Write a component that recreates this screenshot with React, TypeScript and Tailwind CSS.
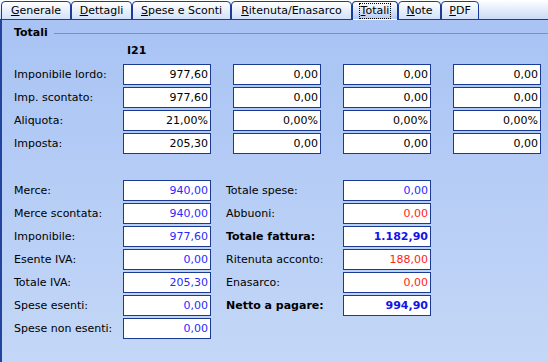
import React from 'react';

const tabs: { label: string; w: string }[] = [
    { label: 'Generale', w: 'w-[70px]' },
    { label: 'Dettagli', w: 'w-[61px]' },
    { label: 'Spese e Sconti', w: 'w-[99px]' },
    { label: 'Ritenuta/Enasarco', w: 'w-[121px]' },
    { label: 'Totali', w: 'w-[46px]' },
    { label: 'Note', w: 'w-[43px]' },
    { label: 'PDF', w: 'w-[38px]' },
];

const Tab: React.FC<{ label: string; w: string; active?: boolean }> = ({ label, w, active }) => (
    <div
        className={`relative -mb-px flex h-[19px] ${w} items-center justify-center rounded-t-[4px] border border-[#1b3c98] bg-gradient-to-b from-white ${active ? 'border-b-transparent to-[#b4cbf4]' : 'to-[#d3e1f8]'}`}
    >
        <span className={`px-[1px] leading-[14px] ${active ? 'outline outline-1 outline-dotted outline-black' : ''}`}>
            <span className="underline underline-offset-1">{label[0]}</span>
            {label.slice(1)}
        </span>
    </div>
);

const Box: React.FC<{ value: string; color?: string; bold?: boolean }> = ({ value, color = 'text-black', bold }) => (
    <div
        className={`flex h-[21px] w-[88px] items-center justify-end border border-[#1a3a94] bg-white pr-[2px] ${color} ${bold ? 'font-bold' : ''}`}
    >
        {value}
    </div>
);

const topRows = [
    { label: 'Imponibile lordo:', values: ['977,60', '0,00', '0,00', '0,00'] },
    { label: 'Imp. scontato:', values: ['977,60', '0,00', '0,00', '0,00'] },
    { label: 'Aliquota:', values: ['21,00%', '0,00%', '0,00%', '0,00%'] },
    { label: 'Imposta:', values: ['205,30', '0,00', '0,00', '0,00'] },
];

const blue = 'text-[#2a2aff]';
const red = 'text-[#ff2222]';

const leftRows = [
    ['Merce:', '940,00'],
    ['Merce scontata:', '940,00'],
    ['Imponibile:', '977,60'],
    ['Esente IVA:', '0,00'],
    ['Totale IVA:', '205,30'],
    ['Spese esenti:', '0,00'],
    ['Spese non esenti:', '0,00'],
];

const rightRows: { label: string; value: string; color: string; bold?: boolean }[] = [
    { label: 'Totale spese:', value: '0,00', color: blue },
    { label: 'Abbuoni:', value: '0,00', color: red },
    { label: 'Totale fattura:', value: '1.182,90', color: 'text-[#1414e6]', bold: true },
    { label: 'Ritenuta acconto:', value: '188,00', color: red },
    { label: 'Enasarco:', value: '0,00', color: red },
    { label: 'Netto a pagare:', value: '994,90', color: 'text-[#1414e6]', bold: true },
];

export default function App() {
    return (
        <div className="flex h-[362px] w-[548px] flex-col overflow-hidden text-[11px] leading-[14px] text-black [font-family:'DejaVu_Sans',Verdana,sans-serif]">
            {/* tab strip */}
            <div className="flex h-[20px] shrink-0 items-end border-b border-[#1b3c98] bg-gradient-to-b from-white to-[#c9daf6] pl-[1px]">
                {tabs.map((t) => (
                    <Tab key={t.label} label={t.label} w={t.w} active={t.label === 'Totali'} />
                ))}
            </div>

            {/* panel */}
            <div className="flex flex-1 flex-col border-l-2 border-[#23449e] bg-gradient-to-b from-[#a8c3f4] to-[#c4d7f7] pl-[12px] pt-[6px]">
                <div className="flex items-center">
                    <span className="font-bold">Totali</span>
                    <div className="ml-[6px] h-px flex-1 bg-[#6f93d8]" />
                </div>
                <div className="mt-[4px] pl-[113px] font-bold">I21</div>

                <div className="mt-[6px] flex flex-col gap-[2px]">
                    {topRows.map((r) => (
                        <div key={r.label} className="flex items-center">
                            <div className="w-[109px]">{r.label}</div>
                            <div className="flex gap-[22px]">
                                {r.values.map((v, i) => (
                                    <Box key={i} value={v} />
                                ))}
                            </div>
                        </div>
                    ))}
                </div>

                <div className="mt-[26px] flex">
                    <div className="flex flex-col gap-[2px]">
                        {leftRows.map(([l, v]) => (
                            <div key={l} className="flex items-center">
                                <div className="w-[109px]">{l}</div>
                                <Box value={v} color={blue} />
                            </div>
                        ))}
                    </div>
                    <div className="ml-[15px] flex flex-col gap-[2px]">
                        {rightRows.map((r) => (
                            <div key={r.label} className="flex items-center">
                                <div className={`w-[117px] ${r.bold ? 'font-bold' : ''}`}>{r.label}</div>
                                <Box value={r.value} color={r.color} bold={r.bold} />
                            </div>
                        ))}
                    </div>
                </div>
            </div>
        </div>
    );
}
